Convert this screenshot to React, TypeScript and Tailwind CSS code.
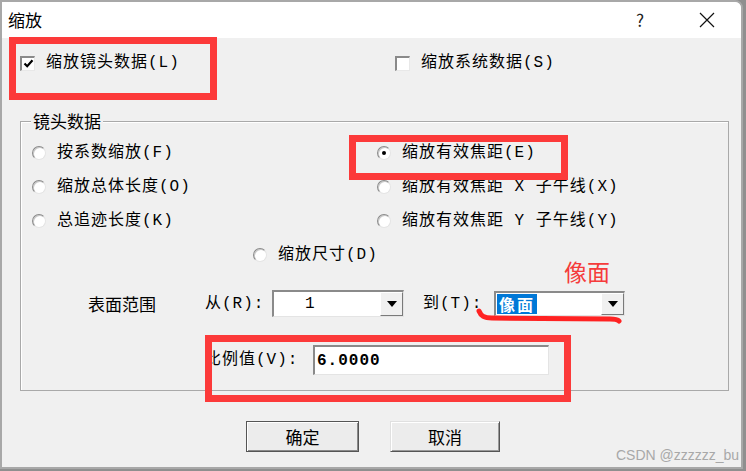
import React from "react";

const dlgFont = "font-['Liberation_Mono','Noto_Sans_CJK_SC',monospace] text-[16px] tracking-[1px] text-black";
const sansFont = "font-['Noto_Sans_CJK_SC','Liberation_Sans',sans-serif]";

function Radio({ checked, label }: { checked?: boolean; label: string }) {
  return (
    <div className="flex items-center">
      <div className="w-[14px] h-[14px] rounded-full bg-white border border-t-[#8a8a8a] border-l-[#8a8a8a] border-b-[#e4e4e4] border-r-[#e4e4e4] shadow-[inset_1px_1px_0_#c8c8c8] flex items-center justify-center">
        {checked && <div className="w-[4px] h-[4px] rounded-full bg-black" />}
      </div>
      <span className={`ml-[11px] whitespace-pre leading-none ${dlgFont}`}>{label}</span>
    </div>
  );
}

function Checkbox({ checked, label }: { checked?: boolean; label: string }) {
  return (
    <div className="flex items-center">
      <div className="w-[15px] h-[15px] bg-white border-t-2 border-l-2 border-[#8a8a8a] border-b border-r border-b-[#e8e8e8] border-r-[#e8e8e8] flex items-center justify-center">
        {checked && (
          <svg width="11" height="11" viewBox="0 0 11 11">
            <path d="M1.5 5.5 L4.2 8.2 L9.5 2.2" fill="none" stroke="#000" strokeWidth="2.2" />
          </svg>
        )}
      </div>
      <span className={`ml-[11px] whitespace-pre leading-none ${dlgFont}`}>{label}</span>
    </div>
  );
}

function DropBtn() {
  return (
    <div className="w-[23px] h-full bg-[#f0f0f0] border border-t-white border-l-white border-b-[#7a7a7a] border-r-[#7a7a7a] flex items-center justify-center">
      <svg width="10" height="6" viewBox="0 0 10 6">
        <path d="M0 0 H10 L5 6 Z" fill="#000" />
      </svg>
    </div>
  );
}

export default function App() {
  return (
    <div className="relative w-[746px] h-[471px] bg-[#8f8f8f] overflow-hidden">
      <div className="w-[743px] h-[469px] border-2 border-[#a8a8a8] rounded-tr-[8px] overflow-hidden flex flex-col bg-[#f0f0f0]">
        {/* Title bar */}
        <div className="h-[36px] bg-white flex items-center shrink-0">
          <span className={`ml-[6px] text-[17px] text-black ${sansFont}`}>缩放</span>
          <span className={`ml-auto text-[17px] text-[#222] ${sansFont}`}>?</span>
          <div className="ml-[55px] mr-[26px]">
            <svg width="16" height="16" viewBox="0 0 16 16">
              <path d="M1 1 L15 15 M15 1 L1 15" stroke="#111" strokeWidth="1.2" />
            </svg>
          </div>
        </div>

        {/* Content */}
        <div className="flex-1 pt-[12px]">
          <div className="flex h-[26px] items-center pl-[18px]">
            <div className="w-[375px]">
              <Checkbox checked label="缩放镜头数据(L)" />
            </div>
            <Checkbox label="缩放系统数据(S)" />
          </div>

          {/* Group box */}
          <div className="relative mt-[45px] ml-[18px] w-[709px] border border-[#a9a9a9] shadow-[inset_1px_1px_0_#ffffff] pt-[14px] pl-[11px] pb-[15px]">
            <span className={`absolute left-[10px] top-[-13px] px-[2px] bg-[#f0f0f0] text-[17px] leading-[24px] text-black ${sansFont}`}>
              镜头数据
            </span>
            <div className="grid grid-cols-[345px_1fr]">
              <div className="h-[34px] flex items-center"><Radio label="按系数缩放(F)" /></div>
              <div className="h-[34px] flex items-center"><Radio checked label="缩放有效焦距(E)" /></div>
              <div className="h-[34px] flex items-center"><Radio label="缩放总体长度(O)" /></div>
              <div className="h-[34px] flex items-center"><Radio label="缩放有效焦距 X 子午线(X)" /></div>
              <div className="h-[34px] flex items-center"><Radio label="总追迹长度(K)" /></div>
              <div className="h-[34px] flex items-center"><Radio label="缩放有效焦距 Y 子午线(Y)" /></div>
            </div>
            <div className="h-[34px] flex items-center pl-[221px]">
              <Radio label="缩放尺寸(D)" />
            </div>

            {/* Surface range row */}
            <div className="mt-[18px] h-[27px] flex items-center">
              <span className={`ml-[56px] w-[117px] text-[17px] text-black ${sansFont}`}>表面范围</span>
              <span className={`w-[67px] ${dlgFont}`}>从(R):</span>
              <div className="w-[132px] h-[27px] bg-white border-t-2 border-l-2 border-[#8a8a8a] border-b border-r border-b-[#e4e4e4] border-r-[#e4e4e4] flex items-stretch">
                <span className={`flex-1 pl-[31px] flex items-center ${dlgFont}`}>1</span>
                <DropBtn />
              </div>
              <span className={`ml-[19px] w-[71px] ${dlgFont}`}>到(T):</span>
              <div className="w-[131px] h-[25px] bg-white border-t-2 border-l-2 border-[#8a8a8a] border-b border-r border-b-[#e4e4e4] border-r-[#e4e4e4] flex items-stretch">
                <div className="flex-1 pl-[1px] flex items-center">
                  <span className={`bg-[#0078d7] text-white px-[2px] h-[20px] flex items-center font-bold font-['Noto_Sans_CJK_SC',sans-serif] text-[16px] tracking-[2px]`}>像面</span>
                </div>
                <DropBtn />
              </div>
            </div>

            {/* Ratio row */}
            <div className="mt-[28px] h-[30px] flex items-center">
              <span className={`ml-[173px] w-[108px] ${dlgFont}`}>比例值(V):</span>
              <div className="w-[236px] h-[30px] bg-white border-t-2 border-l-2 border-[#8a8a8a] border-b border-r border-b-[#e4e4e4] border-r-[#e4e4e4] flex items-center pl-[2px]">
                <span className="font-['Liberation_Mono',monospace] font-bold text-[16px] tracking-[1px] text-black">6.0000</span>
              </div>
            </div>
          </div>

          {/* Buttons */}
          <div className="mt-[30px] flex pl-[244px]">
            <button className={`w-[113px] h-[31px] bg-[#ececec] border border-[#555] shadow-[inset_1px_1px_0_#ffffff,inset_-1px_-1px_0_#8a8a8a] text-[17px] text-black ${sansFont}`}>
              确定
            </button>
            <button className={`ml-[31px] w-[110px] h-[31px] bg-[#ececec] border border-t-[#e0e0e0] border-l-[#e0e0e0] border-b-[#555] border-r-[#555] shadow-[inset_1px_1px_0_#ffffff,inset_-1px_-1px_0_#9a9a9a] text-[17px] text-black ${sansFont}`}>
              取消
            </button>
          </div>
        </div>
      </div>

      {/* Annotations */}
      <div className="absolute left-[9px] top-[37px] w-[208px] h-[63px] border-[7px] border-[#fc3a3a]" />
      <div className="absolute left-[349px] top-[135px] w-[219px] h-[45px] border-[7px] border-[#fc3a3a]" />
      <div className="absolute left-[205px] top-[335px] w-[366px] h-[67px] border-[7px] border-[#fc3a3a]" />
      <span className={`absolute left-[564px] top-[255px] text-[23px] leading-[32px] text-[#f53b3b] ${sansFont}`}>像面</span>
      <svg className="absolute left-0 top-0" width="746" height="471" viewBox="0 0 746 471">
        <path d="M479 311 C481 316 484 318 492 318 L610 319 C615 319 618 320 619 321" fill="none" stroke="#f22" strokeWidth="5" strokeLinecap="round" />
      </svg>
      <span className="absolute left-[616px] top-[446px] text-[14px] leading-[18px] text-[#a8a8a8] font-['Liberation_Sans',sans-serif]">
        CSDN @zzzzzz_bu
      </span>
    </div>
  );
}
